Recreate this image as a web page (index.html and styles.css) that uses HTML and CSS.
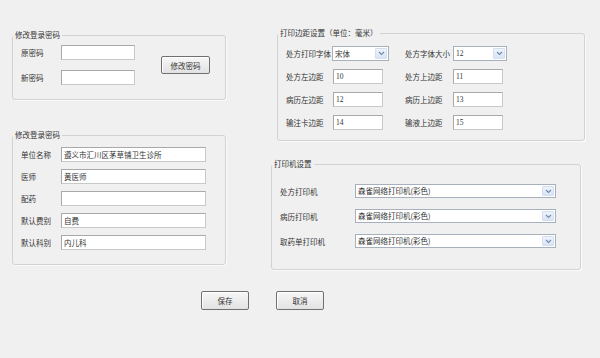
FILE: index.html
```html
<!DOCTYPE html>
<html lang="zh-CN">
<head>
<meta charset="utf-8">
<title>设置</title>
<link rel="stylesheet" href="styles.css">
</head>
<body>
<div class="page">
  <div class="main">
    <div class="col-left">
      <fieldset class="group g1">
        <legend>修改登录密码</legend>
        <div class="g1-inner">
          <div class="form-grid g1-grid">
            <span class="lbl">原密码</span><div class="field w74"></div>
            <span class="lbl">新密码</span><div class="field w74"></div>
          </div>
          <div class="btn btn-pwd">修改密码</div>
        </div>
      </fieldset>
      <fieldset class="group g2">
        <legend>修改登录密码</legend>
        <div class="form-grid g2-grid">
          <span class="lbl">单位名称</span><div class="field w145">遵义市汇川区茅草铺卫生诊所</div>
          <span class="lbl">医师</span><div class="field w145">黄医师</div>
          <span class="lbl">配药</span><div class="field w145"></div>
          <span class="lbl">默认费别</span><div class="field w145">自费</div>
          <span class="lbl">默认科别</span><div class="field w145">内儿科</div>
        </div>
      </fieldset>
    </div>
    <div class="col-right">
      <fieldset class="group g3">
        <legend>打印边距设置（单位：毫米）</legend>
        <div class="form-grid g3-grid">
          <span class="lbl">处方打印字体</span>
          <div class="select w57"><span class="sel-text">宋体</span><span class="arrow"><svg width="7" height="5" viewBox="0 0 7 5"><path d="M1 1 L3.5 3.5 L6 1" fill="none" stroke="#7088b0" stroke-width="1.1"/></svg></span></div>
          <span class="lbl">处方字体大小</span>
          <div class="select w54"><span class="sel-text num">12</span><span class="arrow"><svg width="7" height="5" viewBox="0 0 7 5"><path d="M1 1 L3.5 3.5 L6 1" fill="none" stroke="#7088b0" stroke-width="1.1"/></svg></span></div>

          <span class="lbl">处方左边距</span><div class="field w50 num shift">10</div>
          <span class="lbl">处方上边距</span><div class="field w50 num">11</div>

          <span class="lbl">病历左边距</span><div class="field w50 num shift">12</div>
          <span class="lbl">病历上边距</span><div class="field w50 num">13</div>

          <span class="lbl">输注卡边距</span><div class="field w50 num shift">14</div>
          <span class="lbl">输液上边距</span><div class="field w50 num">15</div>
        </div>
      </fieldset>
      <fieldset class="group g4">
        <legend>打印机设置</legend>
        <div class="form-grid g4-grid">
          <span class="lbl">处方打印机</span>
          <div class="select w201"><span class="sel-text">森雀网络打印机(彩色)</span><span class="arrow"><svg width="7" height="5" viewBox="0 0 7 5"><path d="M1 1 L3.5 3.5 L6 1" fill="none" stroke="#7088b0" stroke-width="1.1"/></svg></span></div>
          <span class="lbl">病历打印机</span>
          <div class="select w201"><span class="sel-text">森雀网络打印机(彩色)</span><span class="arrow"><svg width="7" height="5" viewBox="0 0 7 5"><path d="M1 1 L3.5 3.5 L6 1" fill="none" stroke="#7088b0" stroke-width="1.1"/></svg></span></div>
          <span class="lbl">取药单打印机</span>
          <div class="select w201"><span class="sel-text">森雀网络打印机(彩色)</span><span class="arrow"><svg width="7" height="5" viewBox="0 0 7 5"><path d="M1 1 L3.5 3.5 L6 1" fill="none" stroke="#7088b0" stroke-width="1.1"/></svg></span></div>
        </div>
      </fieldset>
    </div>
  </div>
  <div class="actions">
    <div class="btn btn-act">保存</div>
    <div class="btn btn-act">取消</div>
  </div>
</div>
</body>
</html>
```
FILE: styles.css
```css
* { box-sizing: border-box; }

html, body {
  margin: 0;
  padding: 0;
}

body {
  width: 600px;
  height: 358px;
  overflow: hidden;
  background: #f0f0f0;
  font-family: "Noto Sans CJK SC", "Noto Sans", sans-serif;
  font-size: 7.5px;
  color: #333;
}

.page {
  padding-top: 26px;
}

.main {
  display: flex;
  align-items: flex-start;
}

.col-left {
  margin-left: 12px;
  width: 214px;
  margin-top: 2px;
}

.col-right {
  margin-left: 45px;
  width: 314px;
}

.group {
  margin: 0;
  padding: 0;
  border: 1px solid #d2d2d2;
  border-radius: 3px;
  box-shadow: 1px 1px 0 #fbfbfb;
  min-width: 0;
}

.group legend {
  padding: 0 2px;
  margin-left: 0;
  line-height: 14px;
  height: 14px;
  color: #333;
}

.lbl {
  white-space: nowrap;
  line-height: 15px;
}

.field {
  height: 15px;
  background: #fff;
  border: 1px solid #a9a9a9;
  border-right-color: #c9c9c9;
  border-bottom-color: #c9c9c9;
  line-height: 13px;
  padding-left: 2px;
  white-space: nowrap;
  overflow: hidden;
}

.num {
  font-family: "Liberation Serif", serif;
  font-size: 7.5px;
}

.w74 { width: 74px; }
.w145 { width: 145px; }
.w50 { width: 50px; }
.w57 { width: 57px; }
.w54 { width: 54px; }
.w201 { width: 201px; }

.shift { margin-left: 1px; }

/* group 1 */
.g1-inner {
  display: flex;
  align-items: center;
  padding: 3px 0 14px 8px;
}

.form-grid {
  display: grid;
  align-items: center;
}

.g1-grid {
  grid-template-columns: 40px 74px;
  grid-auto-rows: 15px;
  row-gap: 10px;
}

.btn {
  display: flex;
  align-items: center;
  justify-content: center;
  border: 1px solid #707070;
  border-radius: 2px;
  background: linear-gradient(#f7f7f7, #e2e2e2);
  box-shadow: inset 1px 1px 0 #fff;
  color: #333;
}

.btn-pwd {
  margin-left: 26px;
  width: 49px;
  height: 18px;
}

/* group 2 */
.g2 {
  margin-top: 28px;
}

.g2-grid {
  grid-template-columns: 40px 145px;
  grid-auto-rows: 15px;
  row-gap: 7px;
  padding: 5px 0 14px 8px;
}

/* group 3 */
.g3 {
  margin-left: 6px;
  width: 308px;
}

.g3-grid {
  grid-template-columns: 46px 73px 48px auto;
  grid-auto-rows: 15px;
  row-gap: 8px;
  padding: 6px 0 10px 8px;
}

/* selects */
.select {
  display: flex;
  height: 15px;
  background: #fff;
  border: 1px solid #a7b1bd;
}

.sel-text {
  flex: 1;
  line-height: 13px;
  padding-left: 2px;
  white-space: nowrap;
  overflow: hidden;
}

.arrow {
  width: 12px;
  margin: 1px;
  display: flex;
  align-items: center;
  justify-content: center;
  background: linear-gradient(#eef3fb, #d9e4f4);
  border: 1px solid #d3dff0;
  border-radius: 1px;
}

/* group 4 */
.g4 {
  margin-top: 16px;
  width: 310px;
}

.g4-grid {
  grid-template-columns: 75px 201px;
  grid-auto-rows: 14px;
  row-gap: 11px;
  padding: 13px 0 21px 8px;
}

.g4 .select {
  height: 14px;
}

.g4 .sel-text {
  line-height: 12px;
}

/* actions */
.actions {
  display: flex;
  gap: 27px;
  padding-left: 201px;
  margin-top: 21px;
}

.btn-act {
  width: 48px;
  height: 19px;
}
```
